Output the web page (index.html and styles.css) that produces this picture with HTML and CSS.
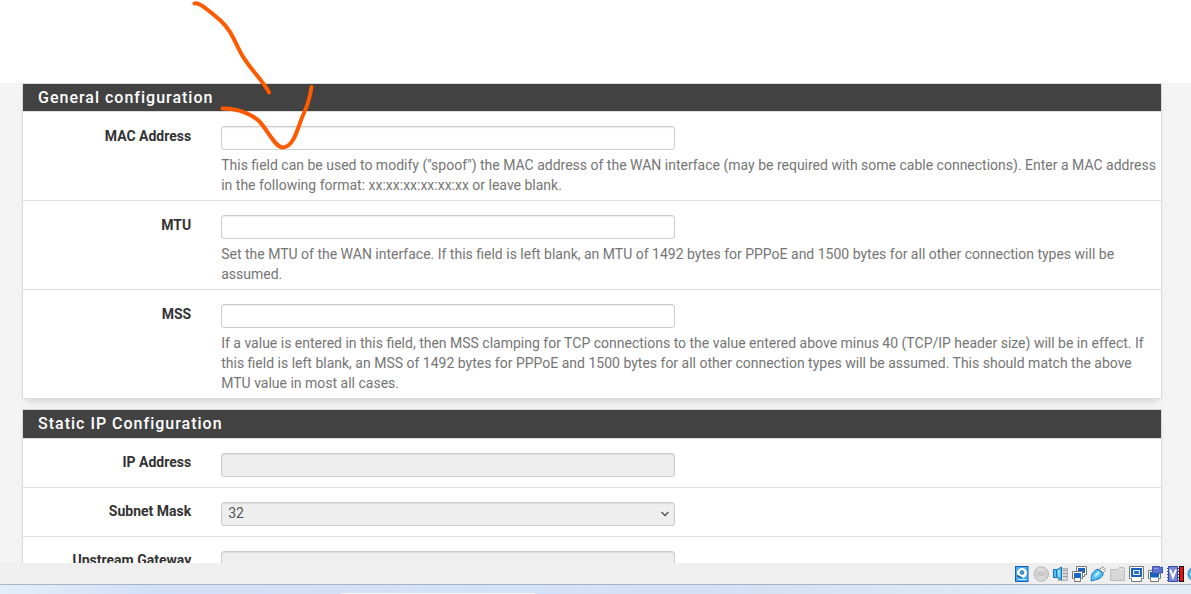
FILE: index.html
```html
<!DOCTYPE html>
<html lang="en">
<head>
<meta charset="utf-8">
<title>General configuration</title>
<link rel="stylesheet" href="styles.css">
</head>
<body>
<main class="page">
  <form class="content">
    <section class="panel">
      <h2 class="panel-title">General configuration</h2>
      <div class="row">
        <label class="label" for="mac">MAC Address</label>
        <div class="field">
          <input class="control" id="mac" type="text">
          <p class="help">This field can be used to modify ("spoof") the MAC address of the WAN interface (may be required with some cable connections). Enter a MAC address in the following format: xx:xx:xx:xx:xx:xx or leave blank.</p>
        </div>
      </div>
      <div class="row">
        <label class="label" for="mtu">MTU</label>
        <div class="field">
          <input class="control" id="mtu" type="text">
          <p class="help">Set the MTU of the WAN interface. If this field is left blank, an MTU of 1492 bytes for PPPoE and 1500 bytes for all other connection types will be assumed.</p>
        </div>
      </div>
      <div class="row">
        <label class="label" for="mss">MSS</label>
        <div class="field">
          <input class="control" id="mss" type="text">
          <p class="help">If a value is entered in this field, then MSS clamping for TCP connections to the value entered above minus 40 (TCP/IP header size) will be in effect. If this field is left blank, an MSS of 1492 bytes for PPPoE and 1500 bytes for all other connection types will be assumed. This should match the above MTU value in most all cases.</p>
        </div>
      </div>
    </section>
    <section class="panel">
      <h2 class="panel-title panel-title-tall">Static IP Configuration</h2>
      <div class="row row-short">
        <label class="label" for="ip">IP Address</label>
        <div class="field"><input class="control" id="ip" type="text" disabled></div>
      </div>
      <div class="row row-short">
        <label class="label" for="mask">Subnet Mask</label>
        <div class="field">
          <div class="select-wrap">
            <select class="control select" id="mask" disabled><option>32</option></select>
            <svg class="chevron" viewBox="0 0 10 8" aria-hidden="true"><path d="M1.500 2 5 5.500 8.500 2"/></svg>
          </div>
        </div>
      </div>
      <div class="row row-short">
        <label class="label" for="gateway">Upstream Gateway</label>
        <div class="field"><input class="control" id="gateway" type="text" disabled></div>
      </div>
    </section>
  </form>
</main>
<svg class="scribble" viewBox="0 0 340 160" aria-hidden="true">
  <path d="M194.500 3.500C199 1.500 213 14 220 20C232 31 234 41 242 55C250 69 264 82 269 92.500"/>
  <path d="M222.500 108.500C238 108 253 115 259 121C267 129 275 147.500 283 147.500C295 146 297 128 304 113C308 104 310 97 311.500 87"/>
</svg>
<footer class="statusbar">
  <svg class="icon" viewBox="0 0 16 16" aria-hidden="true">
    <rect x="1.500" y=".5" width="12.500" height="15" fill="#48adf2" stroke="#1762b8"/>
    <circle cx="8" cy="7" r="5" fill="#fff"/><circle cx="8" cy="6.500" r="1.800" fill="#62b2ee" stroke="#1b63ad"/>
    <path d="M3 9.500 8 12" stroke="#1b63ad" stroke-width="1.500"/><path d="M4 13.500h8" stroke="#bfe7ff"/>
  </svg>
  <svg class="icon" viewBox="0 0 16 16" aria-hidden="true">
    <circle cx="8.300" cy="8" r="7.200" fill="#dadada" stroke="#b5b5b5"/><path d="M4 3 8.300 8 4 13A7 7 0 0 1 4 3ZM12.500 3 8.300 8 12.500 13A7 7 0 0 0 12.500 3Z" fill="#cfcfcf"/>
    <circle cx="8.300" cy="8" r="1.500" fill="#eee" stroke="#aaa"/>
  </svg>
  <svg class="icon" viewBox="0 0 16 16" aria-hidden="true">
    <path d="M9 2.500h6.500v12H6v-3h3z" fill="#d8d8d8" stroke="#b0b0b0"/><path d="M11 4.500h4M11 7.500h4M11 10.500h4" stroke="#999"/>
    <path d="M1.500 3.500h3v8h-3zM4.500 4 9.500 1v13l-5-3z" fill="#51bdf3" stroke="#1672c4"/><path d="M7 4v7" stroke="#a6e8ff" stroke-width="1.500"/>
  </svg>
  <svg class="icon" viewBox="0 0 16 16" aria-hidden="true">
    <path d="M5.500.5h10v8h-2v2h-6v-2h-2z" fill="#fff" stroke="#777"/><path d="M7 2h7v5H7z" fill="#1c62c0"/>
    <path d="M1.500 5.500h10v7h-2v3h-6v-3h-2z" fill="#fff" stroke="#777"/><path d="M3 7h7v5H3z" fill="#1768c8"/>
  </svg>
  <svg class="icon" viewBox="0 0 16 16" aria-hidden="true">
    <path d="m9.500 3.500 3-3 3.200 3-2.700 3.500z" fill="#fff" stroke="#888"/><path d="m12 2.500 1.500 1.500" stroke="#777"/>
    <path d="M1.200 15C1.200 12 1 8.500 4 5.500C6 3.500 8 3 9 3.500L13 7.500C13.500 9.500 11.500 11 10 12C7 14 4 14 1.200 15Z" fill="#57c0f5" stroke="#1972bb"/><path d="M5 10.500 9 6" stroke="#b8f0ff" stroke-width="2.500"/>
  </svg>
  <svg class="icon" viewBox="0 0 16 16" aria-hidden="true">
    <path d="M1.500 14.500V3.500h7l2-2h4l1 2v11z" fill="#d7d7d7" stroke="#bcbcbc"/><path d="M10 3.500h5" stroke="#eee"/>
  </svg>
  <svg class="icon" viewBox="0 0 16 16" aria-hidden="true">
    <path d="M1.500.5h14v12h-2v3h-10v-3h-2z" fill="#fff" stroke="#777"/><path d="M3 2h11v9H3z" fill="#1763bf"/>
    <path d="M5.500 4.500h6v4h-6z" fill="#2676d5" stroke="#fff"/>
  </svg>
  <svg class="icon" viewBox="0 0 16 16" aria-hidden="true">
    <path d="M1.500 4.500h12v8h-2v3h-8v-3h-2z" fill="#fff" stroke="#777"/><path d="M3 6h9v5.500H3z" fill="#1563bf"/>
    <path d="M5.500.5h7V2l3-1v6l-3-1v1.500h-7z" fill="#5d73ce" stroke="#3c54ac"/><path d="M7 2.500h4" stroke="#8ca3ec"/>
  </svg>
  <svg class="icon icon-chip" viewBox="0 0 18 16" aria-hidden="true">
    <path d="M1 2.500h12M1 5.500h12M1 8.500h12M1 11.500h12M1 14.500h12" stroke="#3546a3"/><path d="M2.500.5h9v15h-9z" fill="#7788d6" stroke="#3546a3"/>
    <path d="M4 3.500 7 11 10 3.500" fill="none" stroke="#fff" stroke-width="2"/><path d="M13 0h5v16h-5z" fill="#111"/><path d="M14 1h3v14h-3z" fill="#f20e08"/>
  </svg>
  <svg class="icon" viewBox="0 0 16 16" aria-hidden="true">
    <circle cx="8" cy="8" r="7" fill="#55bdf2" stroke="#2182c4"/><path d="M4 9C4 6 6 4 8 4" stroke="#b8edff" stroke-width="2" fill="none"/>
  </svg>
</footer>
<div class="taskbar"><div class="taskbar-search"></div></div>
</body>
</html>
```
FILE: styles.css
```css
* { box-sizing: border-box; }
body {
  margin: 0;
  height: 100vh;
  display: flex;
  flex-direction: column;
  overflow: hidden;
  background: #fff;
  color: #333;
  font: 14px/20px Roboto, "Liberation Sans", sans-serif;
}
.page { flex: 1; min-height: 0; padding-top: 83px; overflow: hidden; }
.content { padding: 0 29px 0 22px; background: #f4f4f4; }
.panel {
  margin-bottom: 10px;
  background: #fff;
  border: 1px solid #dcdcdc;
  box-shadow: 0 6px 8px -4px rgba(0, 0, 0, .15);
}
.panel-title {
  margin: 0;
  padding: 0 15px;
  background: #424242;
  color: #fff;
  border-bottom: 1px solid #dcdcdc;
  font-size: 16px;
  font-weight: 500;
  line-height: 27px;
  letter-spacing: 1px;
}
.panel-title-tall { line-height: 28px; }
.row {
  display: grid;
  grid-template-columns: 16.1% 1fr;
  padding: 14px 0 5px;
  border-bottom: 1px solid #dcdcdc;
}
.row:last-child { border-bottom: 0; }
.row-short { padding-bottom: 10px; }
.label { padding-right: 15px; text-align: right; font-weight: 700; }
.row-short .label { line-height: 18px; }
.field { padding: 0 5px 0 15px; }
.control {
  display: block;
  width: 48.5%;
  height: 24px;
  padding: 0 6px;
  border: 1px solid #ccc;
  border-radius: 3px;
  background: #fff;
  color: #555;
  font: inherit;
  box-shadow: inset 0 1px 1px rgba(0, 0, 0, .08);
}
.control:disabled { background: #eee; opacity: 1; }
.select-wrap { display: grid; width: 48.5%; align-items: center; }
.select { grid-area: 1 / 1; width: 100%; padding-bottom: 2px; appearance: none; }
.chevron {
  grid-area: 1 / 1;
  justify-self: end;
  width: 10px;
  height: 8px;
  margin-right: 5px;
  fill: none;
  stroke: #555;
  stroke-width: 1.5;
}
.help { margin: 5px 0 0; color: #757575; }
.scribble {
  position: absolute;
  top: 0;
  left: 0;
  width: 340px;
  height: 160px;
  pointer-events: none;
  fill: none;
  stroke: #ff5a00;
  stroke-width: 4;
  stroke-linecap: round;
}
.statusbar {
  display: flex;
  justify-content: flex-end;
  align-items: center;
  gap: 3px;
  height: 22px;
  margin-right: -12px;
  background: #efefef;
  border-bottom: 1px solid #abb3c0;
}
.icon { flex: none; width: 16px; height: 16px; }
.icon-chip { width: 18px; }
.taskbar {
  height: 9px;
  padding-top: 8px;
  overflow: hidden;
  background: linear-gradient(90deg, #e2eff9 0, #d3e0fa 12%, #d5def7 25%, #d3e2fb 40%, #d5dff6 60%, #dce8f6 80%, #e2edf6 100%);
}
.taskbar-search { width: 200px; height: 9px; margin-left: 338px; border-radius: 5px; background: #f2f6fd; }
```
